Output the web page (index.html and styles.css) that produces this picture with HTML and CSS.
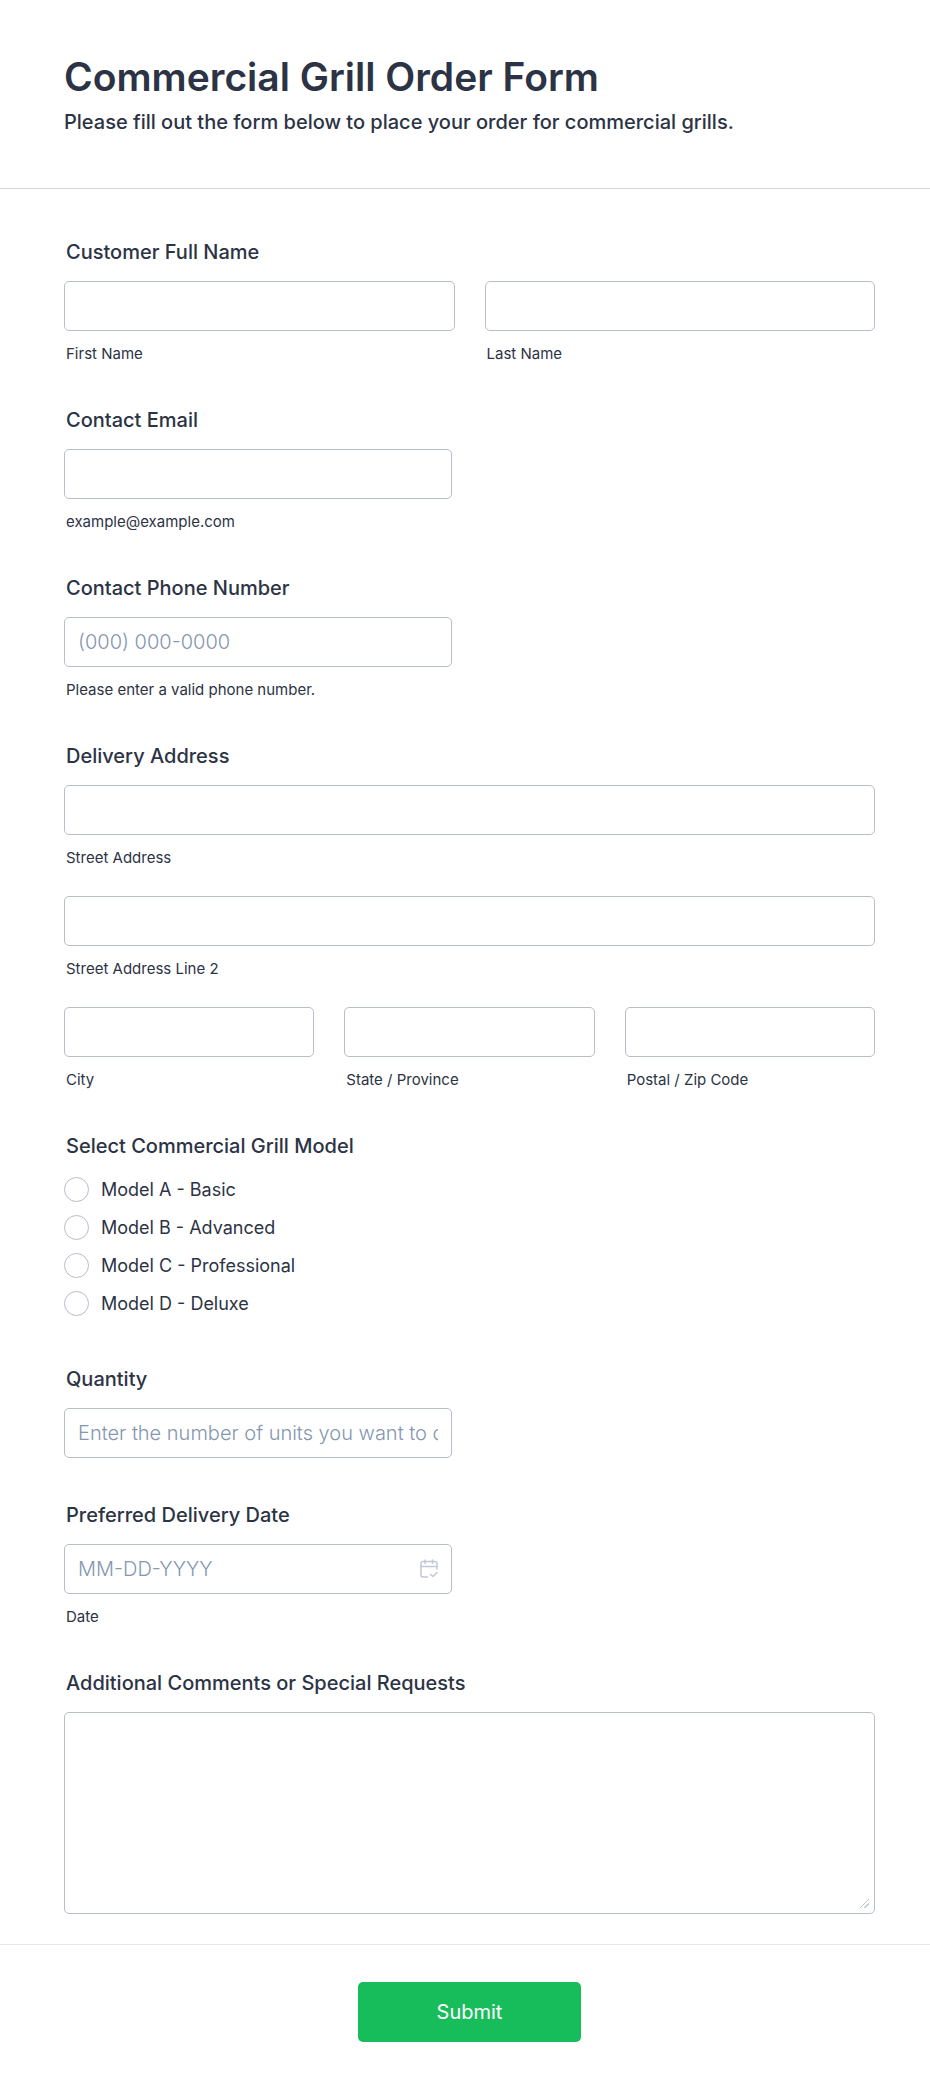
FILE: index.html
```
<!DOCTYPE html>
<html lang="en">
<head>
  <meta charset="UTF-8">
  <meta name="viewport" content="width=device-width, initial-scale=1.0">
  <title>Commercial Grill Order Form</title>
  <link rel="stylesheet" href="styles.css">
</head>
<body>

  <form class="order-form" id="order-form">
    <header class="form-header">
      <h1>Commercial Grill Order Form</h1>
      <p>Please fill out the form below to place your order for commercial grills.</p>
    </header>

    <div class="form-body">
      <fieldset class="field">
        <legend class="field-label">Customer Full Name</legend>
        <div class="columns">
          <div class="column">
            <input class="text-input" type="text" id="first-name" name="first-name">
            <label class="sub-label" for="first-name">First Name</label>
          </div>
          <div class="column">
            <input class="text-input" type="text" id="last-name" name="last-name">
            <label class="sub-label" for="last-name">Last Name</label>
          </div>
        </div>
      </fieldset>

      <div class="field">
        <label class="field-label" for="email">Contact Email</label>
        <input class="text-input half" type="email" id="email" name="email">
        <label class="sub-label" for="email">example@example.com</label>
      </div>

      <div class="field">
        <label class="field-label" for="phone">Contact Phone Number</label>
        <input class="text-input half" type="tel" id="phone" name="phone" placeholder="(000) 000-0000">
        <label class="sub-label" for="phone">Please enter a valid phone number.</label>
      </div>

      <fieldset class="field">
        <legend class="field-label">Delivery Address</legend>
        <div class="address">
          <div class="column">
            <input class="text-input" type="text" id="street" name="street">
            <label class="sub-label" for="street">Street Address</label>
          </div>
          <div class="column">
            <input class="text-input" type="text" id="street2" name="street2">
            <label class="sub-label" for="street2">Street Address Line 2</label>
          </div>
          <div class="columns">
            <div class="column">
              <input class="text-input" type="text" id="city" name="city">
              <label class="sub-label" for="city">City</label>
            </div>
            <div class="column">
              <input class="text-input" type="text" id="state" name="state">
              <label class="sub-label" for="state">State / Province</label>
            </div>
            <div class="column">
              <input class="text-input" type="text" id="zip" name="zip">
              <label class="sub-label" for="zip">Postal / Zip Code</label>
            </div>
          </div>
        </div>
      </fieldset>

      <fieldset class="field">
        <legend class="field-label">Select Commercial Grill Model</legend>
        <div class="options">
          <label class="option"><input type="radio" name="model" value="A">Model A - Basic</label>
          <label class="option"><input type="radio" name="model" value="B">Model B - Advanced</label>
          <label class="option"><input type="radio" name="model" value="C">Model C - Professional</label>
          <label class="option"><input type="radio" name="model" value="D">Model D - Deluxe</label>
        </div>
      </fieldset>

      <div class="field">
        <label class="field-label" for="quantity">Quantity</label>
        <input class="text-input half" type="text" inputmode="numeric" id="quantity" name="quantity" placeholder="Enter the number of units you want to order">
      </div>

      <div class="field">
        <label class="field-label" for="date">Preferred Delivery Date</label>
        <div class="date-box half">
          <input class="text-input" type="text" id="date" name="date" placeholder="MM-DD-YYYY">
          <svg class="date-icon" viewBox="0 0 18 20" fill="none" stroke="currentColor" stroke-width="1.5" stroke-linecap="round" stroke-linejoin="round" aria-hidden="true">
            <path d="M7.5 18H3a2 2 0 0 1-2-2V4.500a2 2 0 0 1 2-2h12a2 2 0 0 1 2 2V10"/>
            <path d="M1 7.500h16M5 1v3.500M12.500 1v3.500"/>
            <path d="M10.500 15.500l2.500 2 4-4"/>
          </svg>
        </div>
        <label class="sub-label" for="date">Date</label>
      </div>

      <div class="field">
        <label class="field-label" for="comments">Additional Comments or Special Requests</label>
        <textarea class="text-input comments" id="comments" name="comments"></textarea>
      </div>
    </div>

    <footer class="form-footer">
      <button type="submit" class="submit-button">Submit</button>
    </footer>
  </form>

</body>
</html>
```
FILE: styles.css
```
* {
  box-sizing: border-box;
}
body {
  margin: 0;
  background-color: #fff;
  color: #2c3345;
  font-family: Inter, "Liberation Sans", sans-serif;
}
.form-header {
  padding: 53px 55px 54px 64px;
  border-bottom: 1px solid #d3d7e2;
}
.form-header h1 {
  margin: 0;
  font-size: 39px;
  font-weight: 600;
  line-height: 48px;
}
.form-header p {
  margin: 9px 0 0;
  font-size: 20px;
  font-weight: 500;
  line-height: 24px;
}
.form-body {
  display: flex;
  flex-direction: column;
  gap: 45px;
  padding: 51px 55px 30px 64px;
}
.field {
  display: flex;
  flex-direction: column;
  min-width: 0;
  margin: 0;
  padding: 0;
  border: none;
}
.field-label {
  margin-bottom: 17px;
  padding: 0 2px;
  font-size: 20px;
  font-weight: 500;
  line-height: 24px;
}
.columns {
  display: flex;
  gap: 30px;
}
.column {
  display: flex;
  flex: 1;
  flex-direction: column;
  min-width: 0;
}
.address {
  display: flex;
  flex-direction: column;
  gap: 29px;
}
.text-input {
  width: 100%;
  height: 50px;
  padding: 0 13px;
  border: 1px solid #b8bdcc;
  border-radius: 5px;
  background-color: #fff;
  color: #2c3345;
  font-family: inherit;
  font-size: 20px;
}
.text-input::placeholder {
  color: #8496b0;
  font-weight: 300;
  opacity: 1;
}
.half {
  width: 100%;
  max-width: 388px;
}
.sub-label {
  margin-top: 14px;
  padding: 0 2px;
  font-size: 15px;
  line-height: 18px;
}
.options {
  display: flex;
  flex-direction: column;
  align-items: flex-start;
  gap: 13px;
  padding: 2px 0 6px;
}
.option {
  display: flex;
  align-items: center;
  gap: 12px;
  font-size: 18px;
  line-height: 25px;
}
.option input {
  width: 25px;
  height: 25px;
  margin: 0;
  border: 1px solid #b8bdcc;
  border-radius: 50%;
  appearance: none;
}
.option input:checked {
  border: 8px solid #18bd5b;
}
.date-box {
  position: relative;
}
.date-box .text-input {
  display: block;
  padding-right: 46px;
}
.date-icon {
  position: absolute;
  top: 15px;
  right: 14px;
  width: 18px;
  height: 20px;
  color: #c3c8d5;
  pointer-events: none;
}
.comments {
  display: block;
  height: 202px;
  padding: 12px 13px;
  resize: vertical;
}
.comments::-webkit-resizer {
  background: linear-gradient(135deg, transparent 45%, #c3c8d5 45%, #c3c8d5 55%, transparent 55%, transparent 72%, #c3c8d5 72%, #c3c8d5 82%, transparent 82%) 1px 1px / 9px 9px no-repeat;
}
.form-footer {
  display: flex;
  justify-content: center;
  padding: 37px 55px 49px 64px;
  border-top: 1px solid #e3e8f2;
}
.submit-button {
  min-width: 223px;
  height: 60px;
  padding: 0 24px;
  border: none;
  border-radius: 5px;
  background-color: #18bd5b;
  color: #fff;
  font-family: inherit;
  font-size: 20px;
  cursor: pointer;
}
```
